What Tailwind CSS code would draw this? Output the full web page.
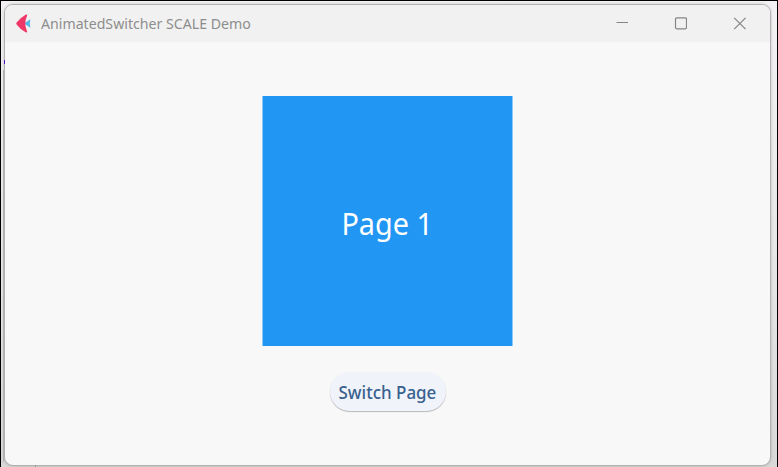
<!DOCTYPE html>
<html lang="en">
<head>
<meta charset="utf-8">
<title>AnimatedSwitcher SCALE Demo</title>
<script src="https://cdn.jsdelivr.net/npm/@tailwindcss/browser@4"></script>
</head>
<body class="h-[467px] w-[778px] overflow-hidden border-l border-t border-r border-black bg-linear-to-b from-[#f3f1f3] via-[#e9e8e9] to-[#d8d8d8] pl-[3px] pt-[3px] font-['Noto_Sans','Open_Sans',sans-serif]">
  <main class="relative flex h-[462px] w-[767px] flex-col overflow-hidden rounded-[9px] border border-[#b2b2b2] bg-[#f8f8f8] shadow-[0_0_3px_#0003]">
    <header class="flex h-[37px] shrink-0 items-center bg-[#f1f1f1] pl-[10px]">
      <svg class="h-[19px] w-[17px] shrink-0" viewBox="0 0 17 19">
        <path d="M9 9.5 15.4 5.2Q14.2 9.5 15.4 13.8Z" fill="#55b9e6"/>
        <path d="M1.6 8.6 Q5 4 10.6 .8 Q12.9 .1 12 2 Q8.6 9.5 12 17 Q12.9 18.9 10.6 18.2 Q5 15 1.6 10.4 Q.9 9.5 1.6 8.6Z" fill="#ef3768"/>
      </svg>
      <h1 class="mb-[2px] ml-[9px] w-[240px] origin-left scale-x-[0.943] whitespace-nowrap text-[15px] leading-5 text-[#8d8d8d]">AnimatedSwitcher SCALE Demo</h1>
      <div class="ml-auto flex items-center gap-[46px] pr-[24px]">
        <svg class="h-[13px] w-[13px]" viewBox="0 0 13 13" fill="none" stroke="#858585"><path d="M1.5 5.5h12"/></svg>
        <svg class="h-[13px] w-[13px]" viewBox="0 0 13 13" fill="none" stroke="#858585" stroke-width="1.2"><rect x="1.5" y=".8" width="11" height="11" rx="1.2"/></svg>
        <svg class="h-[13px] w-[13px]" viewBox="0 0 13 13" fill="none" stroke="#858585" stroke-width="1.2"><path d="M1.2.8 12.6 12.2M12.6.8 1.2 12.2"/></svg>
      </div>
    </header>
    <section class="flex flex-col items-center pt-[54px]">
      <div class="flex h-[250px] w-[250px] -translate-x-[0.5px] items-center justify-center bg-[#2196f3] pt-[6px]">
        <span class="ml-px scale-x-[0.96] whitespace-nowrap text-[30px] leading-10 text-white">Page 1</span>
      </div>
      <button class="mt-[26px] flex h-[39px] w-[116px] items-center justify-center rounded-full bg-[#f1f3fa] pt-px shadow-[0_1px_1px_#00000044]">
        <span class="scale-x-[0.97] whitespace-nowrap text-[17.5px] font-medium leading-6 text-[#38618f]">Switch Page</span>
      </button>
    </section>
  </main>
  <i class="absolute left-[4px] top-[60px] h-[4px] w-px bg-[#5010c0]"></i>
  <i class="absolute left-[3px] top-[70px] h-[392px] w-px bg-[#b5b2b4]"></i>
  <i class="absolute left-[35px] top-[465px] h-[2px] w-px bg-[#999]"></i>
</body>
</html>
